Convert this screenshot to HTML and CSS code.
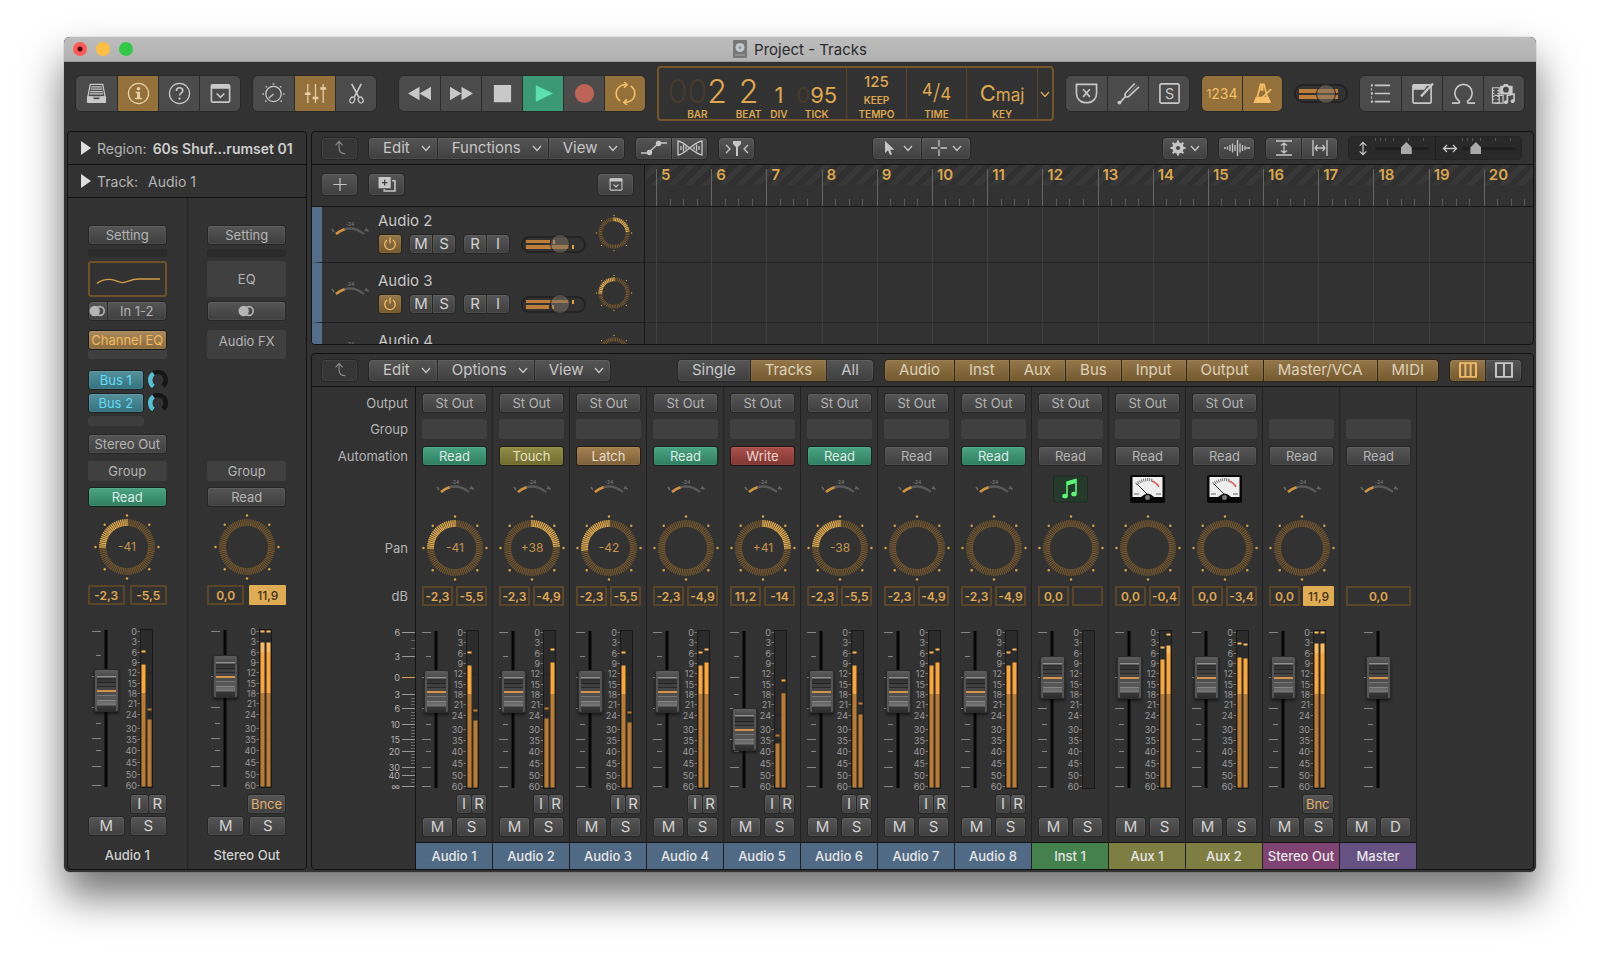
FILE: index.html
```html
<!DOCTYPE html>
<html lang="en">
<head>
    <meta charset="UTF-8">
    <meta name="viewport" content="width=device-width, initial-scale=1.0">
    <title>Project - Tracks</title>
    <link rel="stylesheet" href="styles.css">
</head>
<body>
    <!-- icon sprite -->
    <svg class="sprite" aria-hidden="true">
        <symbol id="chev" viewBox="0 0 10 10"><path d="M1 3l4 4.500L9 3" class="line"/></symbol>
        <symbol id="library" viewBox="0 0 24 24"><path d="M5.500 2.500h13l2.500 13H3z" class="line"/><path d="M6.500 5h11M6 7.500h12M5.500 10h13M5 12.500h14" class="line"/><path d="M2 15h6c.5 2 1.500 3 4 3s3.500-1 4-3h6v5.500c0 1-.5 1.500-1.500 1.500h-17C2.500 22 2 21.500 2 20.500z" class="solid"/></symbol>
        <symbol id="info" viewBox="0 0 24 24"><circle cx="12" cy="12" r="10.500" class="line"/><circle cx="12" cy="7" r="1.900" class="solid"/><path d="M9 10.200h4.500v6.300H15.500V18h-7v-1.500h2v-4.800H9z" class="solid"/></symbol>
        <symbol id="help" viewBox="0 0 24 24"><circle cx="12" cy="12" r="10.500" class="line"/><path d="M8.800 9.300c0-2 1.300-3.300 3.300-3.300s3.300 1.200 3.300 3c0 2.300-3.300 2.500-3.300 5.200" class="line bold"/><circle cx="12.100" cy="17.300" r="1.200" class="solid"/></symbol>
        <symbol id="tray" viewBox="0 0 24 24"><rect x="2.500" y="3" width="19" height="18" rx="1.500" class="line bold"/><path d="M2 2.500h20v4.500H2z" class="solid"/><path d="M8 12l4 4 4-4" class="line bold"/></symbol>
        <symbol id="dial" viewBox="0 0 24 24"><circle cx="12" cy="12.500" r="8" class="line"/><path d="M12 12.500L7 17" class="line"/><path d="M12 1.200v1.600M4 4.500l1 1M20 4.500l-1 1M.5 12.500H2M22 12.500h1.500M3.500 20.500l1-1M20.500 20.500l-1-1" class="line bold"/></symbol>
        <symbol id="sliders" viewBox="0 0 24 24"><path d="M4 2v20M12 2v20M20 2v20" class="line"/><path d="M1 11h6v2.500H1zM9 15.500h6V18H9zM17 5.500h6V8h-6z" class="solid"/></symbol>
        <symbol id="scissors" viewBox="0 0 24 24"><path d="M7 2l7.500 14M17 2L9.500 16" class="line bold"/><ellipse cx="7.600" cy="18.800" rx="2.400" ry="3.200" transform="rotate(25 7.600 18.800)" class="line"/><ellipse cx="16.400" cy="18.800" rx="2.400" ry="3.200" transform="rotate(-25 16.400 18.800)" class="line"/></symbol>
        <symbol id="rewind" viewBox="0 0 24 24"><path d="M0 12l12-7v14zM12 12l12-7v14z" class="solid"/></symbol>
        <symbol id="forward" viewBox="0 0 24 24"><path d="M0 5l12 7-12 7zM12 5l12 7-12 7z" class="solid"/></symbol>
        <symbol id="stop" viewBox="0 0 24 24"><path d="M3 3h18v18H3z" class="solid"/></symbol>
        <symbol id="play" viewBox="0 0 24 24"><path d="M4 3.500l18 8.500-18 8.500z" class="solid"/></symbol>
        <symbol id="record" viewBox="0 0 24 24"><circle cx="12" cy="12" r="10" class="solid"/></symbol>
        <symbol id="cycle" viewBox="0 0 24 24"><path d="M6.500 19.800A10 9.500 0 0 1 7 4c2-1.200 4-1.200 6.500-1.200M17.500 4.200A10 9.500 0 0 1 17 20c-2 1.200-4 1.200-6.500 1.200" class="line bold"/><path d="M10.500 0l3.200 2.800L10.500 6M13.500 18l-3.200 3.200L13.500 24" class="line bold"/></symbol>
        <symbol id="replace" viewBox="0 0 24 24"><path d="M1.500 2.500h21v9.500c0 5-4 9.500-9 9.500h-3c-5 0-9-4.500-9-9.500z" class="line bold"/><path d="M8.500 7.500l7 8M15.500 7.500l-7 8" class="line bold"/></symbol>
        <symbol id="fork" viewBox="0 0 24 24"><path d="M2.500 22L9 15M9 15c-1.500-2-.5-3 .5-4L18.500 1.500M9 15c2 1.500 3 .5 4-.5L23 5" class="line bold"/><path d="M12.500 12L21 3" class="line dim"/><circle cx="2.500" cy="21.500" r="2" class="solid"/></symbol>
        <symbol id="solo" viewBox="0 0 24 24"><rect x="2" y="2" width="20" height="20" rx="1.500" class="line bold"/><text x="12" y="17.500" text-anchor="middle" class="solid glyph">S</text></symbol>
        <symbol id="metronome" viewBox="0 0 24 24"><path d="M10 2.500h3.500L18 20H5.500z" class="line bold"/><path d="M5 15.500h13.500L21 22H2.500z" class="solid"/><path d="M10.500 3h2.500v6h-3.500z" class="solid"/><path d="M11.500 16.500L21 7.500" class="line bold"/></symbol>
        <symbol id="list" viewBox="0 0 24 24"><path d="M6 3.500h16M6 12h16M6 20.500h16" class="line bold"/><path d="M2 3.500h2M2 12h2M2 20.500h2M2 7.700h1M2 16.200h1" class="line fat"/></symbol>
        <symbol id="note" viewBox="0 0 24 24"><rect x="2" y="3" width="19" height="19" rx="1.500" class="line bold"/><path d="M1.500 2.500h16L14 8H1.500z" class="solid"/><path d="M10.500 15L23 1.500" class="line fat"/></symbol>
        <symbol id="loop" viewBox="0 0 24 24"><path d="M0 22h6c2 0 2.500-1.200 1-2.500C4.500 17.500 3 14.800 3 11.500a9 9 0 0 1 18 0c0 3.300-1.500 6-4 8-1.500 1.300-1 2.500 1 2.500h6" class="line bold"/></symbol>
        <symbol id="media" viewBox="0 0 26 24"><path d="M9 4h3l1-2h4l1 2h4v9H9z" class="solid"/><circle cx="15" cy="8" r="3" class="hole"/><path d="M1 6h7v16H1z" class="line"/><path d="M1 9h2M1 12h2M1 15h2M1 18h2M6 9h2M6 12h2M6 15h2M6 18h2M3 14h9v8H3" class="line"/><path d="M16.500 21v-7l7-1.500V20" class="line bold"/><circle cx="15" cy="21" r="2" class="solid"/><circle cx="22" cy="20" r="2" class="solid"/></symbol>
        <symbol id="up" viewBox="0 0 16 18"><path d="M3 6l4-4.500L11 6M7 2v7c0 4 2.500 6.500 7 6.500" class="line"/></symbol>
        <symbol id="curve" viewBox="0 0 26 16"><path d="M0 13h7L18 3h8" class="line"/><circle cx="8.500" cy="12.500" r="2.700" class="solid"/><circle cx="17.500" cy="3.500" r="2.700" class="solid"/></symbol>
        <symbol id="flex" viewBox="0 0 26 16"><path d="M1 1c6 0 17 14 24 14V1C18 1 7 15 1 15z" class="line"/><path d="M4 6v4M6.500 4.500v7M9 6.500v3M17 6.500v3M19.500 4.500v7M22 6v4" class="line"/></symbol>
        <symbol id="catch" viewBox="0 0 24 16"><path d="M1 5l4 4-4 4M23 5l-4 4 4 4" class="line"/><path d="M8 1h8v3l-3 3v9h-2V7L8 4z" class="solid"/></symbol>
        <symbol id="pointer" viewBox="0 0 12 16"><path d="M1 1v12l3-2.700L6 15l2-.8L6.200 9.700H10.500z" class="solid"/></symbol>
        <symbol id="cross" viewBox="0 0 16 16"><path d="M8 0v6.500M8 9.500V16M0 8h6.500M9.500 8H16" class="line"/></symbol>
        <symbol id="gear" viewBox="0 0 16 16"><circle cx="8" cy="8" r="4" fill="none" stroke="currentColor" stroke-width="3.500"/><path d="M8 .5v15M.5 8h15M2.700 2.700l10.600 10.600M13.300 2.700L2.700 13.300" stroke="currentColor" stroke-width="2.200"/><circle cx="8" cy="8" r="2" class="hole"/></symbol>
        <symbol id="wave" viewBox="0 0 26 16"><path d="M0 8h2M3.500 6.500v3M6 5v6M8.500 3.500v9M11 5v6M13.500 0v16M16 3.500v9M18.500 5v6M21 6v4M23 7v2M24 8h2" class="line"/></symbol>
        <symbol id="vzoom" viewBox="0 0 16 16"><path d="M0 1h16M0 15h16M8 3v10M5 5.500L8 3l3 2.500M5 10.500L8 13l3-2.500" class="line"/></symbol>
        <symbol id="hzoom" viewBox="0 0 16 16"><path d="M1 0v16M15 0v16M3 8h10M5.500 5L3 8l2.500 3M10.500 5L13 8l-2.500 3" class="line"/></symbol>
        <symbol id="varrow" viewBox="0 0 10 16"><path d="M5 1.500v13M1.500 5L5 1.500 8.500 5M1.500 11L5 14.500 8.500 11" class="line"/></symbol>
        <symbol id="harrow" viewBox="0 0 16 10"><path d="M1.500 5h13M5 1.500L1.500 5 5 8.500M11 1.500L14.500 5 11 8.500" class="line"/></symbol>
        <symbol id="plus" viewBox="0 0 16 16"><path d="M8 1v14M1 8h14" class="line"/></symbol>
        <symbol id="dup" viewBox="0 0 20 16"><path d="M1 0h13v12H1z" class="solid"/><path d="M7.500 3v6M4.500 6h6" stroke="#3c3c3c" stroke-width="1.300"/><path d="M15.500 4H18.500v11H7v-2" class="line bold"/></symbol>
        <symbol id="cols4" viewBox="0 0 16 14"><path d="M1 1h14v12H1zM5.700 1v12M10.300 1v12" class="line bold"/></symbol>
        <symbol id="cols2" viewBox="0 0 16 14"><path d="M1 1h14v12H1zM8 1v12" class="line bold"/></symbol>
        <symbol id="stereo" viewBox="0 0 18 12"><circle cx="11.500" cy="6" r="4.600" class="line bold"/><circle cx="6" cy="6" r="5.500" class="solid"/></symbol>
        <symbol id="power" viewBox="0 0 14 14"><path d="M4 3a5.300 5.300 0 1 0 6 0M7 .5v6" class="line"/></symbol>
        <symbol id="sendring" viewBox="0 0 22 20"><g fill="none" stroke-width="4.500"><path d="M7 17A8 8 0 0 1 11 2a8 8 0 0 1 5 14" stroke="#161616"/><path d="M6.500 16.500A8 8 0 0 1 6.500 3.500" stroke="#55bfd2"/></g></symbol>
        <linearGradient id="level" gradientUnits="userSpaceOnUse" x1="0" y1="6" x2="0" y2="162">
            <stop offset="0" stop-color="#fdbf62"/><stop offset=".13" stop-color="#fcb959"/>
            <stop offset=".14" stop-color="#fba636"/><stop offset=".395" stop-color="#fba636"/>
            <stop offset=".4" stop-color="#bb7c32"/><stop offset="1" stop-color="#bb7c32"/>
        </linearGradient>
    </svg>

    <div class="window">
        <header class="titlebar">
            <div class="lights">
                <button class="light red" aria-label="Close"></button>
                <button class="light yellow" aria-label="Minimize"></button>
                <button class="light green" aria-label="Zoom"></button>
            </div>
            <svg class="doc" viewBox="0 0 14 18"><rect width="14" height="18" rx="1" fill="#777"/><circle cx="7" cy="7.500" r="4.500" fill="#c3c9cc"/><circle cx="7" cy="7.500" r="1.500" fill="#899"/><path d="M2 15h10" stroke="#aaa"/></svg>
            <h1>Project - Tracks</h1>
        </header>

        <div class="controlbar">
            <div class="group">
                <button aria-label="Library"><svg><use href="#library"/></svg></button>
                <button class="on" aria-label="Inspector"><svg><use href="#info"/></svg></button>
                <button aria-label="Quick Help"><svg><use href="#help"/></svg></button>
                <button aria-label="Toolbar"><svg><use href="#tray"/></svg></button>
            </div>
            <div class="group">
                <button aria-label="Smart Controls"><svg><use href="#dial"/></svg></button>
                <button class="on" aria-label="Mixer"><svg><use href="#sliders"/></svg></button>
                <button aria-label="Editors"><svg><use href="#scissors"/></svg></button>
            </div>
            <div class="group transport">
                <button aria-label="Rewind"><svg><use href="#rewind"/></svg></button>
                <button aria-label="Forward"><svg><use href="#forward"/></svg></button>
                <button aria-label="Stop"><svg><use href="#stop"/></svg></button>
                <button class="play" aria-label="Play"><svg><use href="#play"/></svg></button>
                <button class="rec" aria-label="Record"><svg><use href="#record"/></svg></button>
                <button class="on" aria-label="Cycle"><svg><use href="#cycle"/></svg></button>
            </div>
            <div class="lcd">
                <div class="cell position">
                    <div class="field"><span class="big"><i>00</i>2</span><small>BAR</small></div>
                    <div class="field"><span class="big">2</span><small>BEAT</small></div>
                    <div class="field"><span class="mid">1</span><small>DIV</small></div>
                    <div class="field"><span class="mid"><i>0</i>95</span><small>TICK</small></div>
                </div>
                <div class="cell tempo"><div class="field"><b>125</b><small>KEEP</small><small>TEMPO</small></div></div>
                <div class="cell time"><div class="field"><span class="sig"><span class="upper">4</span>/<span class="lower">4</span></span><small>TIME</small></div></div>
                <div class="cell key"><div class="field"><span class="mid">C<em>maj</em></span><small>KEY</small></div></div>
                <button class="more" aria-label="Display mode"><svg><use href="#chev"/></svg></button>
            </div>
            <div class="group">
                <button aria-label="Replace"><svg><use href="#replace"/></svg></button>
                <button aria-label="Tuner"><svg><use href="#fork"/></svg></button>
                <button aria-label="Solo"><svg><use href="#solo"/></svg></button>
            </div>
            <div class="group amber">
                <button class="on count"><small>1</small>234</button>
                <button class="on" aria-label="Metronome"><svg><use href="#metronome"/></svg></button>
            </div>
            <div class="capsule master">
                <span class="bar" style="width: 39px"></span>
                <span class="bar" style="width: 39px"></span>
                <input type="range" aria-label="Master volume" value="68">
            </div>
            <div class="group">
                <button aria-label="List Editors"><svg><use href="#list"/></svg></button>
                <button aria-label="Note Pads"><svg><use href="#note"/></svg></button>
                <button aria-label="Loops"><svg><use href="#loop"/></svg></button>
                <button aria-label="Browsers"><svg class="wide"><use href="#media"/></svg></button>
            </div>
        </div>

        <div class="workspace">
            <aside class="inspector">
                <button class="disclosure"><span class="tri"></span>Region: <strong>60s Shuf...rumset 01</strong></button>
                <button class="disclosure"><span class="tri"></span>Track: <span class="value">Audio 1</span></button>
                <div class="strips">
                    <section class="strip">
                        <button class="btn">Setting</button>
                        <span class="slot dark"></span>
                        <svg class="eq" viewBox="0 0 79 36"><path d="M5 23c4-3 7-4.500 14-4.500 8 0 9 3.500 15 3.500s8-4 18-4h24" fill="none" stroke="#d29b47" stroke-width="1.500"/></svg>
                        <div class="joined"><button class="btn fmt" aria-label="Format"><svg><use href="#stereo"/></svg></button><button class="btn">In 1-2</button></div>
                        <div class="fx"><button class="btn amber">Channel EQ</button></div>
                        <div class="sends">
                            <button class="btn cyan">Bus 1</button><svg class="send"><use href="#sendring"/></svg>
                            <button class="btn cyan">Bus 2</button><svg class="send"><use href="#sendring"/></svg>
                            <span class="slot"></span>
                        </div>
                        <button class="btn">Stereo Out</button>
                        <button class="flat">Group</button>
                        <button class="btn green">Read</button>
                        <div class="knob" data-pan="-41"></div>
                        <div class="pair"><input class="db" aria-label="Volume" value="-2,3"><output class="db">-5,5</output></div>
                        <div class="fader wide" data-level="59" data-meter="33,20,88,78"></div>
                        <div class="ir"><button class="btn">I</button><button class="btn">R</button></div>
                        <div class="pair"><button class="btn">M</button><button class="btn">S</button></div>
                        <h2>Audio 1</h2>
                    </section>
                    <section class="strip">
                        <button class="btn">Setting</button>
                        <span class="slot dark"></span>
                        <button class="flat tall">EQ</button>
                        <button class="btn" aria-label="Format"><svg><use href="#stereo"/></svg></button>
                        <button class="fx">Audio FX</button>
                        <div class="blank"></div>
                        <div class="blank"></div>
                        <button class="flat">Group</button>
                        <button class="btn">Read</button>
                        <div class="knob" data-pan="0"></div>
                        <div class="pair"><input class="db" aria-label="Volume" value="0,0"><output class="db hot">11,9</output></div>
                        <div class="fader wide" data-level="45" data-meter="11,0,11,0"></div>
                        <div class="ir single"><button class="btn bounce">Bnce</button></div>
                        <div class="pair"><button class="btn">M</button><button class="btn">S</button></div>
                        <h2>Stereo Out</h2>
                    </section>
                </div>
            </aside>

            <main>
                <section class="panel">
                    <div class="toolbar">
                        <button class="btn tool faded" aria-label="Up"><svg><use href="#up"/></svg></button>
                        <div class="joined menus">
                            <button class="btn">Edit <svg><use href="#chev"/></svg></button><button class="btn">Functions <svg><use href="#chev"/></svg></button><button class="btn">View <svg><use href="#chev"/></svg></button>
                        </div>
                        <div class="joined"><button class="btn tool" aria-label="Automation"><svg><use href="#curve"/></svg></button><button class="btn tool" aria-label="Flex"><svg><use href="#flex"/></svg></button></div>
                        <button class="btn tool" aria-label="Catch"><svg><use href="#catch"/></svg></button>
                        <div class="joined pointers">
                            <button class="btn drop" aria-label="Left-click tool"><svg><use href="#pointer"/></svg><svg class="c"><use href="#chev"/></svg></button><button class="btn drop" aria-label="Command-click tool"><svg><use href="#cross"/></svg><svg class="c"><use href="#chev"/></svg></button>
                        </div>
                        <button class="btn drop snap" aria-label="Snap"><svg><use href="#gear"/></svg><svg class="c"><use href="#chev"/></svg></button>
                        <button class="btn tool" aria-label="Waveform zoom"><svg><use href="#wave"/></svg></button>
                        <div class="joined"><button class="btn tool" aria-label="Fit vertically"><svg><use href="#vzoom"/></svg></button><button class="btn tool" aria-label="Fit horizontally"><svg><use href="#hzoom"/></svg></button></div>
                        <div class="zoomers">
                            <label><svg><use href="#varrow"/></svg><input type="range" aria-label="Vertical zoom" value="60"></label>
                            <label><svg><use href="#harrow"/></svg><input type="range" aria-label="Horizontal zoom" value="20"></label>
                        </div>
                    </div>
                    <div class="arrange">
                        <div class="track-head">
                            <button class="btn tool" aria-label="Add track"><svg><use href="#plus"/></svg></button>
                            <button class="btn tool" aria-label="Duplicate track"><svg><use href="#dup"/></svg></button>
                            <button class="btn tool last" aria-label="Track header options"><svg><use href="#tray"/></svg></button>
                        </div>
                        <div class="ruler" id="ruler"></div>
                        <div class="tracks" id="tracks"></div>
                        <div class="lanes">
                            <div class="lane-rows"><span></span><span></span><span></span></div>
                            <div class="lane-bars" id="lanes"></div>
                        </div>
                    </div>
                </section>

                <section class="panel">
                    <div class="toolbar">
                        <button class="btn tool faded" aria-label="Up"><svg><use href="#up"/></svg></button>
                        <div class="joined menus">
                            <button class="btn">Edit <svg><use href="#chev"/></svg></button><button class="btn">Options <svg><use href="#chev"/></svg></button><button class="btn">View <svg><use href="#chev"/></svg></button>
                        </div>
                        <div class="joined filters views">
                            <button class="btn">Single</button><button class="btn gold">Tracks</button><button class="btn">All</button>
                        </div>
                        <div class="joined filters types">
                            <button class="btn gold">Audio</button><button class="btn gold">Inst</button><button class="btn gold">Aux</button><button class="btn gold">Bus</button><button class="btn gold">Input</button><button class="btn gold">Output</button><button class="btn gold">Master/VCA</button><button class="btn gold">MIDI</button>
                        </div>
                        <div class="joined"><button class="btn tool gold lit" aria-label="Narrow strips"><svg><use href="#cols4"/></svg></button><button class="btn tool" aria-label="Wide strips"><svg><use href="#cols2"/></svg></button></div>
                    </div>
                    <div class="mixer" id="mixer">
                        <div class="labels">
                            <span>Output</span><span>Group</span><span>Automation</span><span></span><span class="pan">Pan</span><span>dB</span>
                            <div id="scale"></div>
                        </div>
                    </div>
                </section>
            </main>
        </div>
    </div>
    <script src="mixer.js"></script>
</body>
</html>
```
FILE: mixer.js
```js
const channels = [
    { name: "Audio 1", auto: "Read", tone: "green", pan: -41, db: ["-2,3", "-5,5"], level: 59, meter: [33, 20, 88, 78] },
    { name: "Audio 2", auto: "Touch", tone: "olive", pan: 38, db: ["-2,3", "-4,9"], level: 59, meter: [86, 76, 30, 17] },
    { name: "Audio 3", auto: "Latch", tone: "tan", pan: -42, db: ["-2,3", "-5,5"], level: 59, meter: [33, 20, 90, 80] },
    { name: "Audio 4", auto: "Read", tone: "green", pan: 0, db: ["-2,3", "-4,9"], level: 59, meter: [33, 20, 30, 17] },
    { name: "Audio 5", auto: "Write", tone: "red", pan: 41, db: ["11,2", "-14"], level: 97, meter: [111, 103, 61, 48] },
    { name: "Audio 6", auto: "Read", tone: "green", pan: -38, db: ["-2,3", "-5,5"], level: 59, meter: [33, 20, 82, 71] },
    { name: "Audio 7", auto: "Read", pan: 0, db: ["-2,3", "-4,9"], level: 59, meter: [33, 20, 30, 17] },
    { name: "Audio 8", auto: "Read", tone: "green", pan: 0, db: ["-2,3", "-4,9"], level: 59, meter: [33, 20, 30, 17] },
    { name: "Inst 1", kind: "inst", auto: "Read", pan: 0, db: ["0,0", ""], level: 45, meter: [] },
    { name: "Aux 1", kind: "aux", auto: "Read", pan: 0, db: ["0,0", "-0,4"], level: 45, meter: [27, 15, 13, 2] },
    { name: "Aux 2", kind: "aux", auto: "Read", pan: 0, db: ["0,0", "-3,4"], level: 45, meter: [25, 11, 26, 12] },
    { name: "Stereo Out", kind: "out", auto: "Read", pan: 0, db: ["0,0", "11,9"], level: 45, meter: [11, 0, 11, 0] },
    { name: "Master", kind: "master", auto: "Read", db: ["0,0"], level: 45 }
];

const gauge = `<svg class="gauge" viewBox="0 0 38 24">
    <path d="M5 15Q19 4 33 15" fill="none" stroke="#595959" stroke-width="2.200"/>
    <path d="M5 15Q9 11.700 13.500 10.300" fill="none" stroke="#d1913f" stroke-width="2.600"/>
    <path d="M1 10l2 3M34 12l2-2M34.500 9.500l3 3" stroke="#666" stroke-width="1.600"/>
    <text x="19" y="7" text-anchor="middle">-24</text></svg>`;

const noteIcon = `<svg class="patch" viewBox="0 0 35 27"><rect x=".5" y=".5" width="34" height="26" rx="2" fill="#263a2c" stroke="#1d2b21"/>
    <path d="M14 20V6.500l9-2.500v13.500" fill="none" stroke="#5cf57a" stroke-width="1.600"/><path d="M14 6l9-2.500v4L14 10z" fill="#5cf57a"/>
    <ellipse cx="12" cy="20.500" rx="2.800" ry="2.300" fill="#5cf57a"/><ellipse cx="21" cy="18.500" rx="2.800" ry="2.300" fill="#5cf57a"/></svg>`;

const vuIcon = `<svg class="patch" viewBox="0 0 35 28"><rect width="35" height="28" rx="2" fill="#080808"/><rect x="2.500" y="2" width="30" height="20" fill="#eee"/>
    <path d="M6 9q11-7 17-3" fill="none" stroke="#777" stroke-dasharray="1 1" stroke-width="3"/><path d="M22 6q5 2 7 6" fill="none" stroke="#d55" stroke-width="1.500"/>
    <path d="M7 9l11 11" stroke="#333"/><path d="M4 19h5M26 19h5" stroke="#666"/><path d="M11 22q7-7 13 0z" fill="#111"/><circle cx="17.500" cy="22.500" r="2.500" fill="#777"/></svg>`;

// point on a circle, angle in degrees clockwise from the top
function polar(radius, angle) {
    const a = (angle - 90) * Math.PI / 180;
    return [34 + radius * Math.cos(a), 34 + radius * Math.sin(a)];
}

function knob(pan, label) {
    const step = 360 / (label ? 80 : 48);
    const end = pan * 2.3;
    let ticks = "";
    for (let a = -180; a < 180; a += step) {
        const [x1, y1] = polar(21, a);
        const [x2, y2] = polar(28, a);
        const lit = pan !== 0 && a >= Math.min(0, end) && a <= Math.max(0, end);
        ticks += `<path d="M${x1} ${y1}L${x2} ${y2}" class="${lit ? "lit" : ""}"/>`;
    }
    for (let a = 0; a < 360; a += 45) {
        const [x, y] = polar(31.500, a);
        ticks += `<circle cx="${x}" cy="${y}" r="1.200"/>`;
    }
    const text = pan && label ? `<text x="34" y="38" text-anchor="middle">${pan > 0 ? "+" : ""}${pan}</text>` : "";
    return `<svg viewBox="0 0 68 68">${ticks}${text}</svg><input type="range" min="-64" max="63" value="${pan}" aria-label="Pan">`;
}

const meterMarks = [[0, 0], [3, 10], [6, 21], [9, 31], [12, 41], [15, 52], [18, 62], [21, 72], [24, 83], [30, 97], [35, 108], [40, 119], [45, 131], [50, 143], [60, 154]];
const faderMarks = [[0, 9], [24, 5], [45, 9], [62, 5], [76, 9], [92, 5], [107, 9], [119, 5], [135, 9], [154, 9]];

function fader(level, meter, wide) {
    const top = 6.5;
    const mx = wide ? 4 : 0;
    let out = `<rect x="18.500" y="5" width="3" height="157" fill="#060606"/>`;
    faderMarks.forEach(([y, w]) => out += `<path d="M${w === 9 ? 6 : 10} ${top + y}h${w}" stroke="#858585"/>`);
    if (meter) {
        meterMarks.forEach(([n, y]) => out += `<text x="${47 + mx}" y="${top + y + 3}" text-anchor="end">${n}</text><path d="M${47.5 + mx} ${top + y}h2.500" stroke="#777"/>`);
        out += `<rect x="${50.5 + mx}" y="4.500" width="12" height="158" fill="#2b2b2b" stroke="#191919"/>`;
        if (meter.length) out += `<path d="M51 48h11M51 89h11M51 115h11M51 137h11" transform="translate(${mx})" stroke="#252525"/>`;
        for (let i = 0; i < meter.length; i += 2) {
            const x = (i ? 57.5 : 51.5) + mx;
            out += `<rect x="${x}" y="${top + meter[i]}" width="4" height="${155 - meter[i]}" fill="url(#level)"/>`;
            out += `<rect x="${x}" y="${top + meter[i + 1] - 1}" width="4" height="2" fill="url(#level)"/>`;
        }
    }
    return `<svg viewBox="0 0 77 168">${out}</svg><input type="range" min="0" max="154" value="${154 - level}" aria-label="Volume">`;
}

// mixer strips
document.getElementById("mixer").insertAdjacentHTML("beforeend", channels.map((c) => {
    const kind = c.kind || "audio";
    const routed = kind !== "out" && kind !== "master";
    const patch = kind === "inst" ? noteIcon : kind === "aux" ? vuIcon : gauge;
    const peak = c.db.length > 1 ? `<output class="db ${c.db[1] === "11,9" ? "hot" : ""}">${c.db[1]}</output>` : "";
    const mid = kind === "audio" ? `<div class="ir"><button class="btn">I</button><button class="btn">R</button></div>`
        : kind === "out" ? `<div class="ir single"><button class="btn bounce">Bnc</button></div>` : "<div></div>";
    return `<section class="channel ${kind}">
        ${routed ? `<button class="btn">St Out</button>` : "<div></div>"}
        <button class="flat" aria-label="Group"></button>
        <button class="btn ${c.tone || ""}">${c.auto}</button>
        <div class="icon">${patch}</div>
        ${c.pan === undefined ? "<div></div>" : `<div class="knob" data-pan="${c.pan}"></div>`}
        <div class="pair"><input class="db" aria-label="Volume" value="${c.db[0]}">${peak}</div>
        <div class="fader" data-level="${c.level}" ${c.meter ? `data-meter="${c.meter}"` : ""}></div>
        ${mid}
        <div class="pair"><button class="btn">M</button><button class="btn">${kind === "master" ? "D" : "S"}</button></div>
        <h2>${c.name}</h2>
    </section>`;
}).join(""));

// track headers
const tracks = [
    { name: "Audio 2", pan: 38, bars: [24, 43] },
    { name: "Audio 3", pan: -42, bars: [43, 23] },
    { name: "Audio 4", pan: 0, bars: [43, 43] }
];
document.getElementById("tracks").innerHTML = tracks.map((t) => `<div class="track">
    <div class="icon">${gauge}</div>
    <div class="info">
        <h2>${t.name}</h2>
        <div class="controls">
            <button class="btn gold lit power" aria-label="Power"><svg><use href="#power"/></svg></button>
            <div class="joined"><button class="btn">M</button><button class="btn">S</button></div>
            <div class="joined"><button class="btn">R</button><button class="btn">I</button></div>
            <div class="capsule">
                ${t.bars.map((w) => `<span class="bar peak" style="width: ${w}px"></span>`).join("")}
                <input type="range" aria-label="Volume" value="66">
            </div>
        </div>
    </div>
    <div class="knob small" data-pan="${t.pan}"></div>
</div>`).join("");

document.querySelectorAll(".knob").forEach((el) => {
    el.innerHTML = knob(Number(el.dataset.pan), !el.classList.contains("small"));
});
document.querySelectorAll(".fader").forEach((el) => {
    const m = el.dataset.meter;
    el.innerHTML = fader(Number(el.dataset.level), m === undefined ? null : m ? m.split(",").map(Number) : [], el.classList.contains("wide"));
});

// ruler and lane grid, bars 5 to 20
for (let bar = 5; bar <= 20; bar++) {
    document.getElementById("ruler").insertAdjacentHTML("beforeend", `<div class="bar-mark"><b>${bar}</b><i></i><i></i><i></i></div>`);
    document.getElementById("lanes").insertAdjacentHTML("beforeend", "<span></span>");
}

// dB scale left of the strips
const scale = [["6", 0], ["3", 24], ["0", 45], ["3", 62], ["6", 76], ["10", 92], ["15", 107], ["20", 119], ["30", 135], ["40", 143], ["∞", 154]];
const minor = [8, 16, 66, 69, 72, 80, 83, 86, 89, 95, 98, 101, 104, 110, 113, 116, 122, 125, 128, 131, 139, 147, 150];
document.getElementById("scale").innerHTML = `<svg viewBox="0 0 40 168">
    ${scale.map(([n, y]) => `<text x="25" y="${y + 9.5}" text-anchor="end">${n}</text><path d="M27 ${y + 6.5}h13" stroke="${n === "0" ? "#e0a344" : "#999"}"/>`).join("")}
    ${minor.map((y) => `<path d="M36 ${y + 6.5}h4" stroke="#666"/>`).join("")}</svg>`;
```
FILE: styles.css
```css
* {
    box-sizing: border-box;
}

body {
    margin: 0;
    padding: 37px 64px 92px;
    background: #fff;
    font-family: Inter, "Liberation Sans", sans-serif;
    font-size: 13px;
    color: #b4b4b4;
}

h1, h2 {
    margin: 0;
    font-weight: 500;
}

button, input {
    font: inherit;
    color: inherit;
    margin: 0;
    padding: 0;
    border: 0;
    background: none;
}

svg {
    display: block;
    color: inherit;
}

.sprite {
    position: absolute;
    width: 0;
    height: 0;
}

.line {
    fill: none;
    stroke: currentColor;
    stroke-width: 1.3;
}

.bold { stroke-width: 1.7; }
.fat { stroke-width: 2.4; }
.dim { stroke-width: 1; opacity: .5; }
.solid { fill: currentColor; }
.hole { fill: #444; }
.glyph { font-size: 15px; }

/* window */

.window {
    background: #323232;
    border-radius: 6px;
    overflow: hidden;
    box-shadow: 0 0 1px rgba(0, 0, 0, .6), 0 24px 42px rgba(0, 0, 0, .56);
}

.titlebar {
    height: 25px;
    display: flex;
    align-items: center;
    justify-content: center;
    gap: 7px;
    position: relative;
    background: linear-gradient(#bdbdbd, #b1b1b1);
    border-bottom: 1px solid #999;
    color: #2b2b2b;
}

.titlebar h1 {
    font-size: 15px;
    font-weight: 400;
}

.doc {
    width: 14px;
    height: 18px;
}

.lights {
    position: absolute;
    left: 9px;
    display: flex;
    gap: 9px;
}

.light {
    width: 14px;
    height: 14px;
    border-radius: 50%;
}

.light.red { background: radial-gradient(circle, #4d0000 2px, #fc5b57 3px); }
.light.yellow { background: #fdbe41; }
.light.green { background: #34c84a; }

/* control bar */

.controlbar {
    height: 69px;
    display: flex;
    align-items: flex-start;
    padding: 4px 11px 0;
    gap: 11px;
}

.group {
    height: 37px;
    margin-top: 9px;
    display: flex;
    background: #4b4b4b;
    border: 1px solid #282828;
    border-radius: 6px;
    overflow: hidden;
    flex: none;
    color: #c8c8c8;
}

.group button {
    width: 41px;
    display: flex;
    align-items: center;
    justify-content: center;
}

.group button + button {
    border-left: 1px solid #2c2c2c;
}

.group.amber button {
    width: 40px;
}

.group svg {
    width: 23px;
    height: 23px;
}

.group .wide {
    width: 26px;
}

.transport {
    margin-left: 10px;
}

.group .on {
    background: #94713a;
    color: #e8cfa8;
}

.transport .on, .group.amber .on {
    color: #f5bd68;
}

.group .play {
    background: #3b9a75;
    color: #5ce0b0;
}

.group .rec {
    color: #bd6457;
}

.group .count {
    font-size: 14px;
    align-items: center;
}

.count small {
    font-size: 12px;
}

.lcd {
    flex: 1;
    height: 55px;
    display: flex;
    border: 2px solid #74552b;
    border-radius: 4px;
    color: #dfa84f;
}

.cell {
    display: flex;
    justify-content: center;
    border-right: 1px solid #5b4629;
    width: 60px;
}

.cell.position {
    flex: 1;
    justify-content: space-evenly;
}

.cell.key {
    width: 71px;
}

.field {
    display: flex;
    flex-direction: column;
    align-items: center;
    justify-content: flex-end;
}

.field small {
    font-size: 10px;
    line-height: 9px;
    font-weight: 600;
}

.field i {
    font-style: normal;
    color: #463b2c;
}

.field b {
    font-size: 15px;
    line-height: 20px;
    font-weight: 500;
}

.tempo .field small:first-of-type {
    line-height: 16px;
    padding-bottom: 2px;
}

.big {
    font-size: 32px;
    line-height: 36px;
    font-weight: 300;
}

.mid {
    font-size: 22px;
    line-height: 30px;
}

.mid em {
    font-size: 17px;
    font-style: normal;
}

.sig {
    font-size: 22px;
    line-height: 32px;
    font-weight: 300;
}

.upper, .lower {
    font-size: 17px;
    font-weight: 400;
}

.upper {
    vertical-align: 4px;
}

.more {
    width: 14px;
}

.more svg {
    width: 10px;
    height: 10px;
    margin: 0 auto;
}

.capsule {
    position: relative;
    width: 65px;
    height: 17px;
    padding: 2px 3px;
    display: flex;
    flex-direction: column;
    justify-content: center;
    gap: 2px;
    border: 2px solid #232323;
    border-radius: 9px;
}

.capsule .bar {
    position: relative;
    height: 4px;
    background: #bd7d3b;
}

.capsule .peak::after {
    content: "";
    position: absolute;
    left: 100%;
    margin-left: 3px;
    width: 2px;
    height: 4px;
    background: #dba447;
}

.capsule input {
    position: absolute;
    inset: -4px 0;
    width: 100%;
    appearance: none;
}

.capsule input::-webkit-slider-thumb {
    appearance: none;
    width: 20px;
    height: 20px;
    border-radius: 50%;
    border: 1px solid #2a2622;
    background: rgba(130, 118, 105, .5);
}

.capsule.master {
    width: 54px;
    height: 19px;
    margin-top: 18px;
    flex: none;
}

.capsule.master input {
    inset: -3px 0;
}

/* shared buttons */

.btn {
    height: 20px;
    border: 1px solid #262626;
    border-radius: 3px;
    background: linear-gradient(#555, #3f3f3f);
    box-shadow: inset 0 0 0 1px rgba(255, 255, 255, .06);
    line-height: 16px;
    text-align: center;
    white-space: nowrap;
}

.btn svg {
    margin: 0 auto;
}

.btn.green { background: linear-gradient(#4aa584, #2f7d5f); color: #dcece4; border-color: #16231e; }
.btn.olive { background: linear-gradient(#938d47, #706b2e); color: #e6e2c0; border-color: #1f1e14; }
.btn.tan { background: linear-gradient(#a4814f, #7d6039); color: #eaddc8; border-color: #231c14; }
.btn.red { background: linear-gradient(#a9504a, #7f3733); color: #f0d5d2; border-color: #241413; }
.btn.amber { background: linear-gradient(#a98a5e, #8a6b3c); color: #f2b95f; border-color: #1a1a1a; }
.btn.cyan { background: linear-gradient(#56919d, #34727f); color: #62dcf3; border-color: #1c2325; }
.toolbar .gold, .btn.gold { background: linear-gradient(#94774a, #74592f); color: #ded0b8; border-color: #2b2416; }
.toolbar .lit, .btn.lit { color: #f0bb69; }

.joined {
    display: flex;
    flex: none;
}

.joined .btn {
    border-radius: 0;
}

.joined .btn + .btn {
    margin-left: -1px;
}

.joined .btn:first-child {
    border-radius: 4px 0 0 4px;
}

.joined .btn:last-child {
    border-radius: 0 4px 4px 0;
}

.flat {
    height: 20px;
    border-radius: 2px;
    background: #404040;
}

.slot {
    display: block;
    height: 10px;
    border-radius: 3px;
    background: #3d3d3d;
}

.slot.dark {
    height: 8px;
    background: #2a2a2a;
}

/* inspector */

.workspace {
    display: flex;
    gap: 4px;
    padding: 0 2px 2px 3px;
}

.inspector {
    width: 240px;
    flex: none;
    border: 1px solid #121212;
    border-radius: 4px;
    display: flex;
    flex-direction: column;
}

.disclosure {
    height: 33px;
    border-bottom: 1px solid #121212;
    display: flex;
    align-items: center;
    gap: 6px;
    padding-left: 13px;
    font-size: 14px;
    white-space: nowrap;
}

.disclosure strong {
    font-weight: 600;
    color: #cecece;
}

.disclosure .value {
    margin-left: 4px;
}

.tri {
    border-left: 10px solid #dedede;
    border-top: 7px solid transparent;
    border-bottom: 7px solid transparent;
}

.strips {
    display: flex;
    flex: 1;
}

.strip {
    flex: 1;
    display: grid;
    grid-template-columns: 79px;
    grid-template-rows: 24px 12px 40px 29px 40px 64px 27px 26px 26px 72px 40px 169px 22px 28px 25px;
    justify-content: center;
    align-items: start;
    padding-top: 27px;
}

.strip + .strip {
    border-left: 1px solid #202020;
}

.strip h2, .channel h2 {
    font-size: 13px;
    text-align: center;
    color: #d0d0d0;
    white-space: nowrap;
}

.strip h2 {
    margin: 3px -12px 0;
}

.eq {
    width: 79px;
    height: 36px;
    border: 2px solid #6f5229;
    border-radius: 3px;
}

.tall {
    height: 36px;
}

.strip .joined .btn {
    flex: 1;
}

.strip .joined .fmt {
    flex: none;
    width: 20px;
}

.fmt svg, .strip > .btn svg {
    width: 17px;
    height: 12px;
}

.fx {
    height: 29px;
    border-radius: 3px;
    background: #3f3f3f;
    padding-bottom: 8px;
}

.fx .btn {
    width: 100%;
    display: block;
}

.sends {
    display: grid;
    grid-template-columns: 56px 22px;
    row-gap: 3px;
    column-gap: 3px;
}

.send {
    width: 22px;
    height: 20px;
}

/* strip parts */

.pair {
    display: flex;
    gap: 3px;
}

.strip .pair {
    gap: 5px;
}

.pair > * {
    flex: 1;
    min-width: 0;
}

.pair .btn {
    font-size: 15px;
    color: #d2d2d2;
}

.db {
    height: 20px;
    width: 100%;
    border: 2px solid #5b4529;
    border-radius: 1px;
    font-size: 12px;
    font-weight: 600;
    line-height: 17px;
    text-align: center;
    color: #e0a84f;
}

.db.hot {
    background: #e0ac53;
    border-color: #e0ac53;
    color: #3f301a;
    font-weight: 500;
}

.ir {
    display: flex;
    justify-content: flex-end;
}

.ir .btn {
    width: 16px;
    font-size: 15px;
    color: #d2d2d2;
}

.strip .ir .btn {
    width: 19px;
}

.ir .btn + .btn {
    margin-left: -1px;
}

.ir.single .btn, .strip .ir.single .btn {
    width: 50%;
    font-size: 13px;
    color: #e0ae68;
}

.knob {
    position: relative;
    width: 68px;
    height: 68px;
    justify-self: center;
}

.knob svg {
    width: 100%;
    height: 100%;
    overflow: visible;
}

.knob path {
    stroke: #7d5b2d;
    stroke-width: 1.1;
}

.knob .lit {
    stroke: #e0a94c;
    stroke-width: 1.4;
}

.knob circle {
    fill: #dba447;
}

.knob text {
    font-size: 12px;
    fill: #c4924b;
}

.knob input {
    position: absolute;
    inset: 0;
    width: 100%;
    opacity: 0;
}

.knob.small {
    width: 38px;
    height: 38px;
}

.knob.small path {
    stroke-width: 1.8;
}

.knob.small .lit {
    stroke-width: 2.4;
}

.gauge {
    width: 38px;
    height: 24px;
}

.gauge text {
    font-size: 5px;
    fill: #858585;
}

.patch {
    width: 35px;
    height: 28px;
}

.fader {
    position: relative;
    width: 77px;
    height: 168px;
    margin-left: -6px;
}

.fader.wide {
    margin-left: -2px;
}

.fader svg {
    width: 77px;
    height: 168px;
}

.fader text, #scale text {
    font-size: 9px;
    fill: #999;
}

#scale text {
    fill: #b4b4b4;
}

.fader input {
    position: absolute;
    left: 8px;
    top: -15px;
    width: 25px;
    height: 197px;
    appearance: none;
    writing-mode: vertical-lr;
    direction: rtl;
}

.fader input::-webkit-slider-thumb {
    appearance: none;
    width: 25px;
    height: 43px;
    border-radius: 2px;
    border: 1px solid #2c2c2c;
    box-shadow: 0 2px 3px rgba(0, 0, 0, .5), inset 2px 0 #555, inset -2px 0 #555;
    background: linear-gradient(#5e5e5e, #4c4c4c 6px, #919191 6px, #919191 7px, #2f2f2f 8px, #3a3a3a 12px, #222 12px, #222 13px, #3f3f3f 13px, #3f3f3f 16px, #282828 16px, #282828 17px, #454545 17px, #454545 20px, #d39249 20px, #d39249 22px, #4e4e4e 22px, #4e4e4e 25px, #777 25px, #777 26px, #565656 26px, #565656 30px, #858585 30px, #858585 31px, #666 31px, #777 35px, #373737 36px, #2d2d2d);
}

/* main area */

main {
    flex: 1;
    min-width: 0;
    display: flex;
    flex-direction: column;
    gap: 8px;
}

.panel {
    border: 1px solid #121212;
    border-radius: 4px;
    overflow: hidden;
}

.toolbar {
    height: 33px;
    display: flex;
    align-items: center;
    gap: 10px;
    padding: 0 11px 0 9px;
    border-bottom: 1px solid #121212;
    font-size: 15px;
}

.toolbar .btn, .track-head .btn {
    height: 23px;
    line-height: 20px;
    color: #c6c6c6;
}

.toolbar .filters .gold {
    color: #ded0b8;
}

.toolbar .btn.lit {
    color: #f0bb69;
}

.tool {
    width: 37px;
    flex: none;
    border-radius: 4px;
}

.tool svg {
    height: 16px;
    width: 26px;
}

.toolbar .faded {
    background: #363636;
    color: #8a8a8a;
}

.menus .btn {
    display: flex;
    align-items: center;
    gap: 11px;
    padding: 0 6px 0 14px;
}

.menus svg, .drop .c {
    width: 10px;
    height: 10px;
}

.drop {
    display: flex;
    align-items: center;
    justify-content: center;
    gap: 5px;
    width: 50px;
    border-radius: 4px;
    flex: none;
}

.drop svg {
    width: 16px;
    height: 16px;
    margin: 0;
}

.toolbar .snap {
    width: 46px;
    gap: 4px;
    margin-left: auto;
}

.pointers {
    margin-left: 107px;
}

.zoomers {
    display: flex;
    height: 24px;
    background: #292929;
    border: 1px solid #242424;
    border-radius: 4px;
}

.zoomers label {
    width: 86px;
    display: flex;
    align-items: center;
    gap: 4px;
    padding: 0 6px;
    color: #c6c6c6;
}

.zoomers label + label {
    border-left: 1px solid #202020;
}

.zoomers svg {
    width: 16px;
    height: 15px;
    flex: none;
}

.zoomers input {
    appearance: none;
    flex: 1;
    min-width: 0;
    height: 20px;
    background:
        repeating-linear-gradient(90deg, #555 0 1px, transparent 1px 5px) 0 0 / 12px 3px no-repeat,
        repeating-linear-gradient(90deg, #555 0 1px, transparent 1px 15px) 18px 0 / 35px 3px no-repeat,
        linear-gradient(#1e1e1e, #1e1e1e) 0 9px / 100% 3px no-repeat;
}

.zoomers input::-webkit-slider-thumb {
    appearance: none;
    width: 11px;
    height: 12px;
    background: #a9a9a9;
    clip-path: polygon(50% 0, 100% 45%, 100% 100%, 0 100%, 0 45%);
}

.arrange {
    display: grid;
    grid-template-columns: 333px 1fr;
    grid-template-rows: 42px 137px;
}

.track-head {
    display: flex;
    align-items: center;
    gap: 10px;
    padding: 0 10px 3px 9px;
    border-right: 1px solid #161616;
    border-bottom: 1px solid #161616;
}

.track-head .tool svg {
    height: 15px;
}

.track-head .last {
    margin-left: auto;
}

.ruler {
    display: grid;
    grid-template-columns: repeat(16, 1fr);
    padding-left: 11px;
    margin-right: -6px;
    border-bottom: 1px solid #161616;
    background: repeating-linear-gradient(135deg, #303030 0 6px, #383838 6px 12px) 0 0 / 100% 20px no-repeat;
}

.bar-mark {
    margin-top: 4px;
    border-left: 1px solid #666;
    display: grid;
    grid-template-columns: repeat(4, 1fr);
    grid-template-rows: 30px 7px;
}

.bar-mark b {
    grid-column: 1 / -1;
    padding-left: 4px;
    font-size: 15px;
    line-height: 12px;
    font-weight: 600;
    color: #dba74e;
}

.bar-mark i {
    border-right: 1px solid #5a5a5a;
}

.tracks {
    overflow: hidden;
    border-right: 1px solid #161616;
}

.track {
    height: 60px;
    display: flex;
    border-left: 10px solid #536d8a;
    border-bottom: 1px solid #1e1e1e;
    padding: 8px 11px 0 9px;
}

.track:first-child {
    margin-top: -4px;
}

.track .icon {
    padding-top: 8px;
    width: 47px;
}

.track h2 {
    font-size: 15px;
    line-height: 20px;
    font-weight: 400;
    color: #c6c6c6;
}

.info {
    flex: 1;
}

.controls {
    display: flex;
    align-items: center;
    gap: 7px;
    margin-top: 3px;
}

.controls .btn {
    width: 24px;
    font-size: 15px;
    color: #d2d2d2;
}

.controls .power {
    color: #f0bb69;
}

.power svg {
    width: 14px;
    height: 14px;
}

.controls .capsule {
    margin-left: 4px;
}

.track .knob {
    margin-top: 3px;
}

.lanes {
    display: grid;
    overflow: hidden;
}

.lane-rows, .lane-bars {
    grid-area: 1 / 1;
}

.lane-rows span {
    display: block;
    height: 60px;
    border-bottom: 1px solid #242424;
}

.lane-rows span:first-child {
    margin-top: -4px;
}

.lane-bars {
    display: grid;
    grid-template-columns: repeat(16, 1fr);
    padding-left: 11px;
    margin-right: -6px;
}

.lane-bars span {
    border-left: 1px solid #414141;
}

/* mixer */

.views {
    margin-left: auto;
}

.filters .btn {
    padding: 0 14px;
}

.mixer {
    display: flex;
}

.labels, .channel {
    display: grid;
    grid-template-rows: 26px 27px 24px 44px 72px 40px 168px 23px 25px 27px;
    padding-top: 6px;
    align-items: start;
}

.labels {
    width: 104px;
    border-right: 1px solid #121212;
    text-align: right;
    flex: none;
}

.labels span {
    padding-right: 7px;
    line-height: 20px;
}

.labels .pan {
    line-height: 68px;
}

#scale svg {
    width: 40px;
    height: 168px;
    margin-left: auto;
}

.channel {
    width: 77px;
    padding-left: 6px;
    padding-right: 5px;
    border-right: 1px solid #202020;
    grid-template-columns: 65px;
}

.channel .icon {
    height: 38px;
    display: flex;
    align-items: center;
    justify-content: center;
}

.channel.master .fader {
    margin-left: 12px;
}

.channel h2 {
    margin: 0 -5px 0 -6px;
    line-height: 26px;
    border-top: 1px solid #121212;
    background: #506a85;
    color: #e6e6e6;
}

.channel.inst h2 { background: #44814c; }
.channel.aux h2 { background: #7e7e43; }
.channel.out h2 { background: #7e4372; }
.channel.master h2 { background: #665183; }
```
